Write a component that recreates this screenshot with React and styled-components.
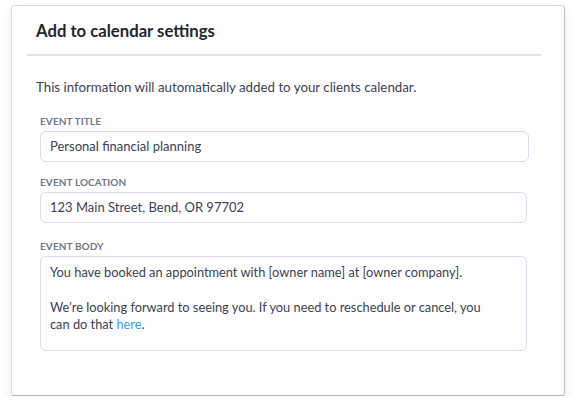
import React from "react"
import styled, { createGlobalStyle } from "styled-components"

const GlobalStyle = createGlobalStyle`
  body {
    margin: 0;
    background: #fff;
    font-family: Lato, "Open Sans", sans-serif;
  }
`

const Card = styled.section`
  box-sizing: border-box;
  width: 554px;
  height: 391px;
  margin: 5px 0 0 11px;
  background: #fff;
  border: 1px solid #dadada;
  border-right-color: #bcbcbc;
  border-bottom-color: #b3b3b3;
  border-radius: 3px;
  box-shadow: 0 5px 12px rgba(0, 0, 0, 0.09);
  padding-top: 15px;
`

const Title = styled.h2`
  margin: 0 0 0 24px;
  font-size: 16.7px;
  line-height: 20px;
  font-weight: 700;
  color: #23262e;
`

const Divider = styled.hr`
  margin: 13px 22px 0 15px;
  border: none;
  height: 2px;
  background: #e4e4e4;
`

const Body = styled.div`
  padding: 0 37px 0 24px;
`

const Intro = styled.p`
  margin: 22px 0 0;
  font-size: 13.3px;
  line-height: 18px;
  color: #3b4252;
`

const Field = styled.div`
  margin-top: ${props => props.gap}px;
  padding-left: 4px;
  display: flex;
  flex-direction: column;
  gap: 3px;
`

const Label = styled.label`
  font-size: 10px;
  line-height: 14px;
  font-weight: 700;
  letter-spacing: 0.1px;
  color: #717989;
  text-transform: uppercase;
`

const Box = styled.div`
  box-sizing: border-box;
  width: ${props => props.w}px;
  height: ${props => props.h}px;
  border: 1px solid #d6ddec;
  border-radius: 6px;
  padding: ${props => (props.multi ? "7px 9px" : "0 9px")};
  display: ${props => (props.multi ? "block" : "flex")};
  align-items: center;
  font-size: ${props => (props.multi ? 12.8 : 13)}px;
  line-height: 17px;
  color: #3b4252;
`

const Gap = styled.div`
  height: 18px;
`

const Anchor = styled.a`
  color: #3aa0f0;
  text-decoration: none;
`

const App = () => (
  <>
    <GlobalStyle />
    <Card>
      <Title>Add to calendar settings</Title>
      <Divider />
      <Body>
        <Intro>This information will automatically added to your clients calendar.</Intro>
        <Field gap={18}>
          <Label>Event title</Label>
          <Box w={489} h={31}>Personal financial planning</Box>
        </Field>
        <Field gap={13}>
          <Label>Event location</Label>
          <Box w={487} h={31}>123 Main Street, Bend, OR 97702</Box>
        </Field>
        <Field gap={16}>
          <Label>Event body</Label>
          <Box w={487} h={95} multi>
            You have booked an appointment with [owner name] at [owner company].
            <Gap />
            We’re looking forward to seeing you. If you need to reschedule or cancel, you
            <br />
            can do that <Anchor href="#">here</Anchor>.
          </Box>
        </Field>
      </Body>
    </Card>
  </>
)

export default App
